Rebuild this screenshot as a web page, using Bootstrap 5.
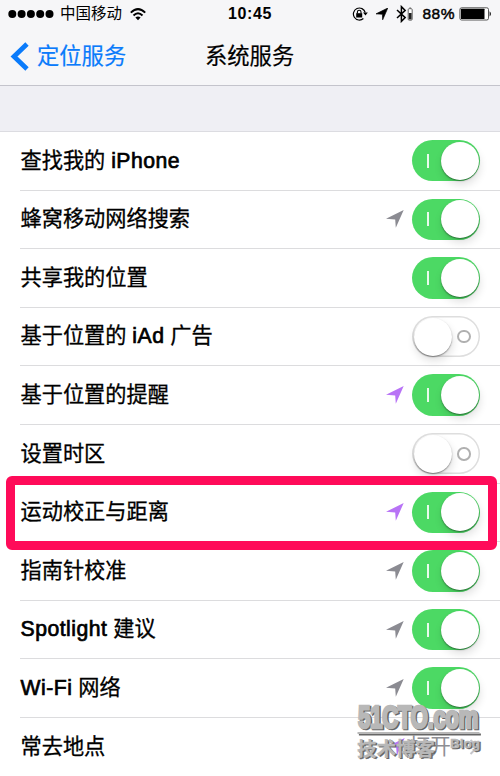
<!DOCTYPE html>
<html lang="zh-CN">
<head>
<meta charset="utf-8">
<meta name="viewport" content="width=device-width, initial-scale=1">
<title>系统服务</title>
<link href="https://cdn.jsdelivr.net/npm/bootstrap@5.3.0/dist/css/bootstrap.min.css" rel="stylesheet">
<style>
body{width:500px;height:776px;overflow:hidden;background:#fff;color:#000;font-family:"Liberation Sans","Noto Sans CJK SC",sans-serif}
.screen{width:500px;height:776px}
.topbar{height:86px;background:#f6f6f8;border-bottom:1px solid #c4c4cc}
.status{height:28px;font-size:15.5px;line-height:28px}
.status svg,.titlebar svg{display:block;flex:none}
.carrier{margin-left:6px}
.percent{-webkit-text-stroke:.45px #000;letter-spacing:.5px}
.clock{font-weight:700;font-size:16px;letter-spacing:.6px}
.side{width:200px}
.titlebar{height:57px;font-size:22.3px;line-height:57px;-webkit-text-stroke:.2px}
.page-title{margin-left:5px}
.back{color:#0a7bfb;text-decoration:none}
.back svg{margin-right:7px}
.gap-band{height:46px;background:#efeff4;border-bottom:1px solid #dcdce1}
.setting{height:58.6px;margin-left:20px;padding-right:20px;border-bottom:1px solid #dcdcde;font-size:21.2px;line-height:1}
.setting .en{-webkit-text-stroke:.7px #000;letter-spacing:.5px}
.setting .zh{-webkit-text-stroke:.3px #000;padding:0 0 1px .5px}
.arrow{color:#8b8b92;margin-right:8px}
.arrow.active{color:#b873f6}
.switch{width:68px;height:41.4px;border-radius:21px;background:#4cd964;padding:2px 1.5px 2px 14.5px}
.switch .bar{width:2px;height:14px;background:#e9fbec}
.switch .knob{width:38px;height:38px;border-radius:50%;background:#fff;box-shadow:0 1px 1.5px rgba(0,0,0,.42),1px 5px 8px rgba(0,0,0,.12)}
.switch.off{background:#fff;box-shadow:inset 0 0 0 1.5px #dedede;padding:2px 9.5px 2px 1.5px}
.switch.off .ring{width:13.5px;height:13.5px;border-radius:50%;border:2.6px solid #b0b0b0}
.focus-box{left:6px;top:476px;width:491px;height:74px;border:9px solid #ff0b59;border-radius:6px}
.stamp{left:350px;top:697px}
.detail{color:#8e8e93;font-size:21.15px;gap:18px;margin-right:1px}
</style>
<script src="https://cdn.jsdelivr.net/npm/bootstrap@5.3.0/dist/js/bootstrap.bundle.min.js"></script>
</head>
<body>
<svg class="d-none">
  <symbol id="loc" viewBox="0 0 18 18"><path fill="currentColor" d="M17.7 0 9.8 17.7 9.2 9.4 0 8.8Z"/></symbol>
</svg>
<main class="screen position-relative overflow-hidden">
  <header class="topbar">
    <div class="status d-flex justify-content-between align-items-center ps-2 pe-2">
      <div class="side d-flex align-items-center">
        <svg width="46" height="10" viewBox="0 0 46 10"><g><circle cx="4.3" cy="5" r="4"/><circle cx="13.6" cy="5" r="4"/><circle cx="22.9" cy="5" r="4"/><circle cx="32.2" cy="5" r="4"/><circle cx="41.5" cy="5" r="4"/></g></svg>
        <span class="carrier">中国移动</span>
        <svg class="ms-2" width="16" height="13" viewBox="0 0 16 13"><g fill="none" stroke="#000" stroke-width="2"><path d="M.8 4.6Q8-2.4 15.2 4.6M3.5 7.5Q8 3.1 12.5 7.5"/></g><path d="M5.4 9.5Q8 7.3 10.6 9.5L8 12.3Z"/></svg>
      </div>
      <div class="clock">10:45</div>
      <div class="side d-flex align-items-center justify-content-end">
        <svg width="16" height="14" viewBox="0 0 16 14"><path d="M13.2 5.5A6 6 0 1 0 11.4 11.5" fill="none" stroke="#000" stroke-width="1.2"/><path d="M11 5.5h4.8l-2.3 3Z"/><rect x="4.2" y="6.2" width="6" height="4.3"/><path d="M5.4 6.4V5a1.8 1.8 0 0 1 3.6 0v1.4" fill="none" stroke="#000" stroke-width="1.1"/></svg>
        <svg class="ms-2" width="12" height="12" viewBox="0 0 18 18"><path d="M17.7 0 10 17.7 9.6 9.4 0 8.8Z" stroke="#000"/></svg>
        <svg class="ms-2" width="18" height="18" viewBox="0 0 18 18"><path d="M1 5 9.2 12.6 5.4 16.4V1.6L9.2 5.4 1 13" fill="none" stroke="#000" stroke-width="1.5"/><rect x="12.2" y="3.7" width="4" height="11.5" rx="1" fill="#fff" stroke="#666"/><path d="M13.3 2.5h1.8v1h-1.8z" fill="#666"/><path d="M12.8 8h2.8v6.4h-2.8z" fill="#222"/></svg>
        <span class="percent ms-2">88%</span>
        <svg class="ms-1" width="33" height="14" viewBox="0 0 33 14"><rect x=".9" y=".8" width="28.6" height="12.2" rx="1.7" fill="#fff" stroke="#444" stroke-width=".9"/><rect x="1.9" y="1.8" width="23.6" height="10.2" rx=".5"/><path d="M30.6 4.2q2.6 2.7 0 5.4Z"/></svg>
      </div>
    </div>
    <div class="titlebar d-flex">
      <a class="side back d-flex align-items-center" href="#"><svg class="ms-2" width="22" height="30" viewBox="0 0 22 30"><path d="M19 2 6 14.5 19 27" fill="none" stroke="currentColor" stroke-width="4.8"/></svg><span>定位服务</span></a>
      <div class="page-title">系统服务</div>
    </div>
  </header>
  <div class="gap-band"></div>
  <section>
    <div class="setting d-flex align-items-center"><span class="zh me-auto">查找我的 <span class="en">iPhone</span></span><span class="switch d-flex align-items-center justify-content-between"><i class="bar"></i><i class="knob"></i></span></div>
    <div class="setting d-flex align-items-center"><span class="zh me-auto">蜂窝移动网络搜索</span><svg class="arrow" width="18" height="18"><use href="#loc"/></svg><span class="switch d-flex align-items-center justify-content-between"><i class="bar"></i><i class="knob"></i></span></div>
    <div class="setting d-flex align-items-center"><span class="zh me-auto">共享我的位置</span><span class="switch d-flex align-items-center justify-content-between"><i class="bar"></i><i class="knob"></i></span></div>
    <div class="setting d-flex align-items-center"><span class="zh me-auto">基于位置的 <span class="en">iAd</span> 广告</span><span class="switch off d-flex align-items-center justify-content-between"><i class="knob"></i><i class="ring"></i></span></div>
    <div class="setting d-flex align-items-center"><span class="zh me-auto">基于位置的提醒</span><svg class="arrow active" width="18" height="18"><use href="#loc"/></svg><span class="switch d-flex align-items-center justify-content-between"><i class="bar"></i><i class="knob"></i></span></div>
    <div class="setting d-flex align-items-center"><span class="zh me-auto">设置时区</span><span class="switch off d-flex align-items-center justify-content-between"><i class="knob"></i><i class="ring"></i></span></div>
    <div class="setting d-flex align-items-center"><span class="zh me-auto">运动校正与距离</span><svg class="arrow active" width="18" height="18"><use href="#loc"/></svg><span class="switch d-flex align-items-center justify-content-between"><i class="bar"></i><i class="knob"></i></span></div>
    <div class="setting d-flex align-items-center"><span class="zh me-auto">指南针校准</span><svg class="arrow" width="18" height="18"><use href="#loc"/></svg><span class="switch d-flex align-items-center justify-content-between"><i class="bar"></i><i class="knob"></i></span></div>
    <div class="setting d-flex align-items-center"><span class="zh me-auto"><span class="en">Spotlight</span> 建议</span><svg class="arrow" width="18" height="18"><use href="#loc"/></svg><span class="switch d-flex align-items-center justify-content-between"><i class="bar"></i><i class="knob"></i></span></div>
    <div class="setting d-flex align-items-center"><span class="zh me-auto"><span class="en">Wi-Fi</span> 网络</span><svg class="arrow" width="18" height="18"><use href="#loc"/></svg><span class="switch d-flex align-items-center justify-content-between"><i class="bar"></i><i class="knob"></i></span></div>
    <div class="setting d-flex align-items-center"><span class="zh me-auto">常去地点</span><svg class="arrow active me-0" width="18" height="18"><use href="#loc"/></svg><span class="detail d-flex align-items-center ms-1"><span>打开</span><svg width="10" height="16" viewBox="0 0 10 16"><path d="M1.5 1 8.5 8l-7 7" fill="none" stroke="#c5c5ca" stroke-width="2"/></svg></span></div>
  </section>
  <div class="focus-box position-absolute"></div>
  <svg class="stamp position-absolute" width="140" height="70" viewBox="0 0 140 70">
    <defs><g id="brand">
      <text transform="translate(8 31) scale(.72 1)" font-size="31" font-weight="700" textLength="167" lengthAdjust="spacing" stroke-width="2.6">51CTO.com</text>
      <path d="M7.5 35h122v2h-122z" stroke="none"/>
      <text x="7" y="59" font-size="19.5" font-weight="700" stroke-width=".3" textLength="78">技术博客</text>
      <text x="100" y="51" font-size="13.5" font-weight="700" stroke-width=".3" textLength="30">Blog</text>
    </g></defs>
    <use href="#brand" x="1.4" y="1.4" fill="#666" stroke="#666"/>
    <use href="#brand" fill="#b8b8b8" stroke="#b8b8b8"/>
  </svg>
</main>
</body>
</html>
